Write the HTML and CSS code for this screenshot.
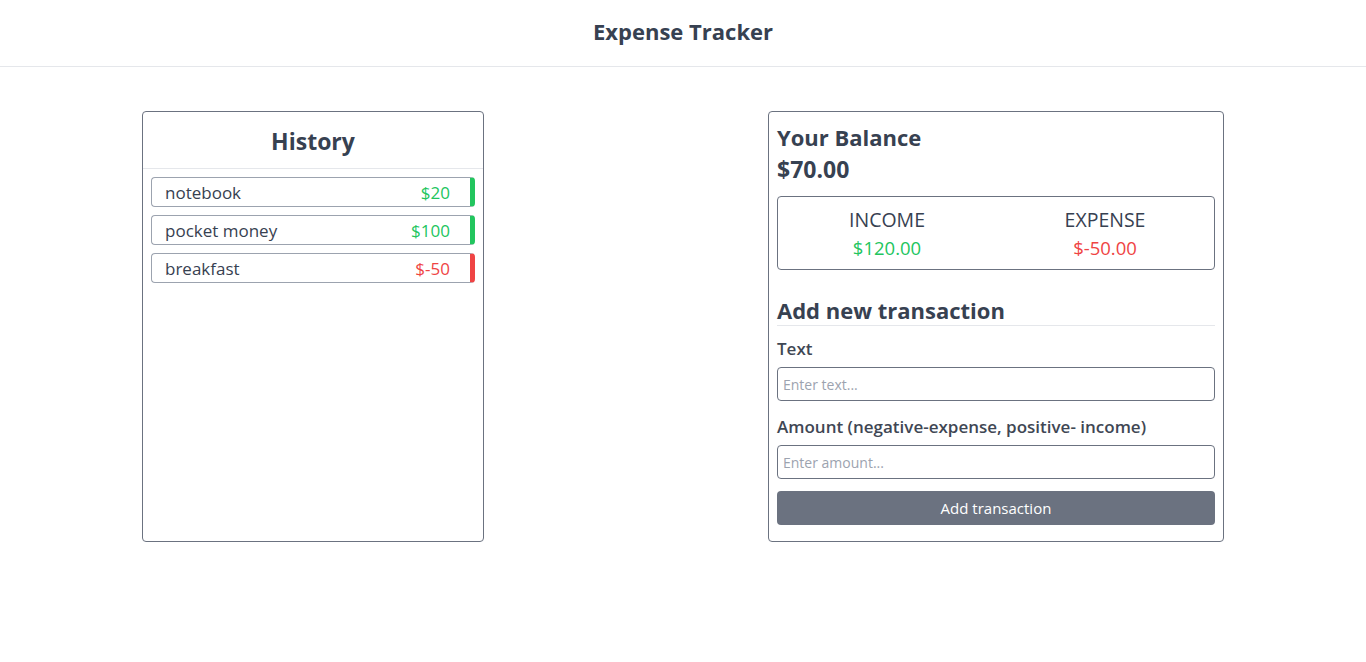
FILE: index.html
```html
<!DOCTYPE html>
<html lang="en">
<head>
<meta charset="utf-8">
<title>Expense Tracker</title>
<link rel="stylesheet" href="styles.css">
</head>
<body>
<header class="topbar">
  <h1 class="app-title">Expense Tracker</h1>
</header>
<main class="layout">
  <section class="card history">
    <h2 class="history-title">History</h2>
    <ul class="history-list">
      <li class="tx plus"><span class="tx-name">notebook</span><span class="tx-amt">$20</span></li>
      <li class="tx plus"><span class="tx-name">pocket money</span><span class="tx-amt">$100</span></li>
      <li class="tx minus"><span class="tx-name">breakfast</span><span class="tx-amt">$-50</span></li>
    </ul>
  </section>
  <section class="card balance">
    <h2 class="bal-label">Your Balance</h2>
    <div class="bal-value">$70.00</div>
    <div class="summary">
      <div class="sum-col">
        <div class="sum-label">INCOME</div>
        <div class="sum-value plus-text">$120.00</div>
      </div>
      <div class="sum-col">
        <div class="sum-label">EXPENSE</div>
        <div class="sum-value minus-text">$-50.00</div>
      </div>
    </div>
    <h3 class="add-title">Add new transaction</h3>
    <form class="tx-form">
      <label class="field-label" for="text">Text</label>
      <input class="field-input" id="text" type="text" placeholder="Enter text...">
      <label class="field-label" for="amount">Amount (negative-expense, positive- income)</label>
      <input class="field-input" id="amount" type="text" placeholder="Enter amount...">
      <button class="submit" type="button">Add transaction</button>
    </form>
  </section>
</main>
</body>
</html>
```
FILE: styles.css
```css
* { box-sizing: border-box; }
html, body { margin: 0; padding: 0; }
body {
  font-family: "Open Sans", "Noto Sans", Arial, sans-serif;
  color: #374151;
  background: #fff;
  height: 662px;
  overflow: hidden;
}
.topbar {
  height: 67px;
  border-bottom: 1px solid #e5e7eb;
  display: flex;
  align-items: center;
  justify-content: center;
  padding-bottom: 4px;
}
.app-title {
  margin: 0;
  font-size: 22px;
  font-weight: 700;
}
.layout {
  display: flex;
  justify-content: space-between;
  align-items: flex-start;
  padding: 44px 142px 0;
}
.card {
  border: 1px solid #6b7280;
  border-radius: 4px;
  height: 431px;
  background: #fff;
}
.history { width: 342px; }
.balance { width: 456px; padding: 9px 8px 0 8px; }
.history-title {
  margin: 0;
  text-align: center;
  font-size: 23px;
  font-weight: 700;
  height: 57px;
  line-height: 58px;
  border-bottom: 1px solid #e5e7eb;
}
.history-list {
  list-style: none;
  margin: 0;
  padding: 8px 8px 0 8px;
  display: flex;
  flex-direction: column;
  gap: 8px;
}
.tx {
  height: 30px;
  border: 1px solid #9ca3af;
  border-right-width: 5px;
  border-radius: 4px;
  display: flex;
  align-items: center;
  justify-content: space-between;
  padding: 0 20px 0 13px;
  font-size: 17px;
}
.tx.plus { border-right-color: #22c55e; }
.tx.minus { border-right-color: #ef4444; }
.tx.plus .tx-amt { color: #22c55e; }
.tx.minus .tx-amt { color: #ef4444; }
.bal-label, .bal-value {
  margin: 0;
  font-size: 22px;
  font-weight: 700;
  line-height: 32px;
}
.bal-value { font-size: 23px; }
.summary {
  margin-top: 11px;
  border: 1px solid #6b7280;
  border-radius: 4px;
  height: 74px;
  display: grid;
  grid-template-columns: 1fr 1fr;
  align-content: center;
  text-align: center;
  padding-top: 2px;
}
.sum-label { font-size: 19.5px; line-height: 28px; }
.sum-value { font-size: 18.5px; line-height: 28px; }
.plus-text { color: #22c55e; }
.minus-text { color: #ef4444; }
.add-title {
  margin: 25px 0 0;
  font-size: 22px;
  font-weight: 700;
  line-height: 30px;
  border-bottom: 1px solid #e5e7eb;
}
.tx-form { display: flex; flex-direction: column; }
.field-label {
  font-size: 17px;
  font-weight: 600;
  margin-top: 10px;
  line-height: 26px;
  color: #3f4754;
}
.field-input {
  margin-top: 5px;
  height: 34px;
  border: 1px solid #6b7280;
  border-radius: 4px;
  padding: 0 5px;
  font-family: inherit;
  font-size: 14px;
  color: #374151;
}
.field-input::placeholder { color: #9ca3af; }
.field-input + .field-label { margin-top: 13px; }
.submit {
  margin-top: 12px;
  height: 34px;
  border: none;
  border-radius: 4px;
  background: #6b7280;
  color: #fff;
  font-family: inherit;
  font-size: 15px;
}
```
